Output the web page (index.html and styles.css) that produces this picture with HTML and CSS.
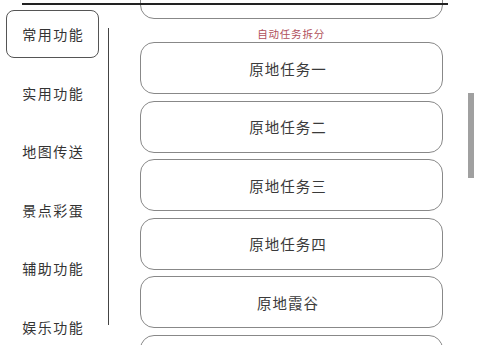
FILE: index.html
```html
<!DOCTYPE html>
<html lang="zh">
<head>
<meta charset="utf-8">
<link rel="stylesheet" href="styles.css">
</head>
<body>
<div class="page">
  <div class="topline"></div>
  <nav class="sidebar">
    <div class="nav-item active">常用功能</div>
    <div class="nav-item">实用功能</div>
    <div class="nav-item">地图传送</div>
    <div class="nav-item">景点彩蛋</div>
    <div class="nav-item">辅助功能</div>
    <div class="nav-item">娱乐功能</div>
  </nav>
  <div class="divider"></div>
  <main class="content">
    <div class="btn partial"></div>
    <div class="section-label">自动任务拆分</div>
    <div class="btn">原地任务一</div>
    <div class="btn">原地任务二</div>
    <div class="btn">原地任务三</div>
    <div class="btn">原地任务四</div>
    <div class="btn">原地霞谷</div>
    <div class="btn"></div>
  </main>
  <div class="scrollbar"></div>
</div>
</body>
</html>
```
FILE: styles.css
```css
html, body {
  margin: 0;
  padding: 0;
  background: #ffffff;
}
body {
  width: 477px;
  height: 345px;
  overflow: hidden;
  font-family: "Noto Sans CJK SC", "Noto Sans", sans-serif;
  color: #3a3a3a;
}
.page {
  position: relative;
  display: flex;
  align-items: flex-start;
  height: 345px;
  overflow: hidden;
}
.topline {
  position: absolute;
  left: 22px;
  top: 3px;
  width: 426px;
  height: 1.5px;
  background: #222;
  z-index: 2;
}
.sidebar {
  display: flex;
  flex-direction: column;
  gap: 10.6px;
  padding: 10px 0 0 6px;
  width: 93px;
  flex-shrink: 0;
}
.nav-item {
  box-sizing: border-box;
  height: 48px;
  display: flex;
  align-items: center;
  justify-content: center;
  font-size: 14px;
  letter-spacing: 1.5px;
  text-indent: 1.5px;
  color: #333;
}
.nav-item.active {
  border: 1.5px solid #555;
  border-radius: 8px;
}
.divider {
  width: 1.6px;
  height: 297px;
  margin: 28px 0 0 8.5px;
  background: #444;
  flex-shrink: 0;
}
.content {
  display: flex;
  flex-direction: column;
  gap: 6.6px;
  width: 303px;
  margin: -33px 0 0 30.5px;
  flex-shrink: 0;
}
.btn {
  box-sizing: border-box;
  height: 52px;
  border: 1.2px solid #888;
  border-radius: 14px;
  display: flex;
  align-items: center;
  justify-content: center;
  font-size: 14.5px;
  letter-spacing: 1px;
  padding-right: 6px;
  color: #3a3a3a;
  flex-shrink: 0;
}
.section-label {
  height: 23px;
  margin: -6.6px 0 0;
  padding-top: 8px;
  box-sizing: border-box;
  line-height: 14px;
  font-size: 10.5px;
  letter-spacing: 0.8px;
  text-align: center;
  color: #b0505a;
  flex-shrink: 0;
}
.section-label + .btn {
  margin-top: -6.6px;
}
.scrollbar {
  width: 6px;
  height: 85px;
  margin: 93px 0 0 25px;
  background: #a0a0a0;
  flex-shrink: 0;
}
```
